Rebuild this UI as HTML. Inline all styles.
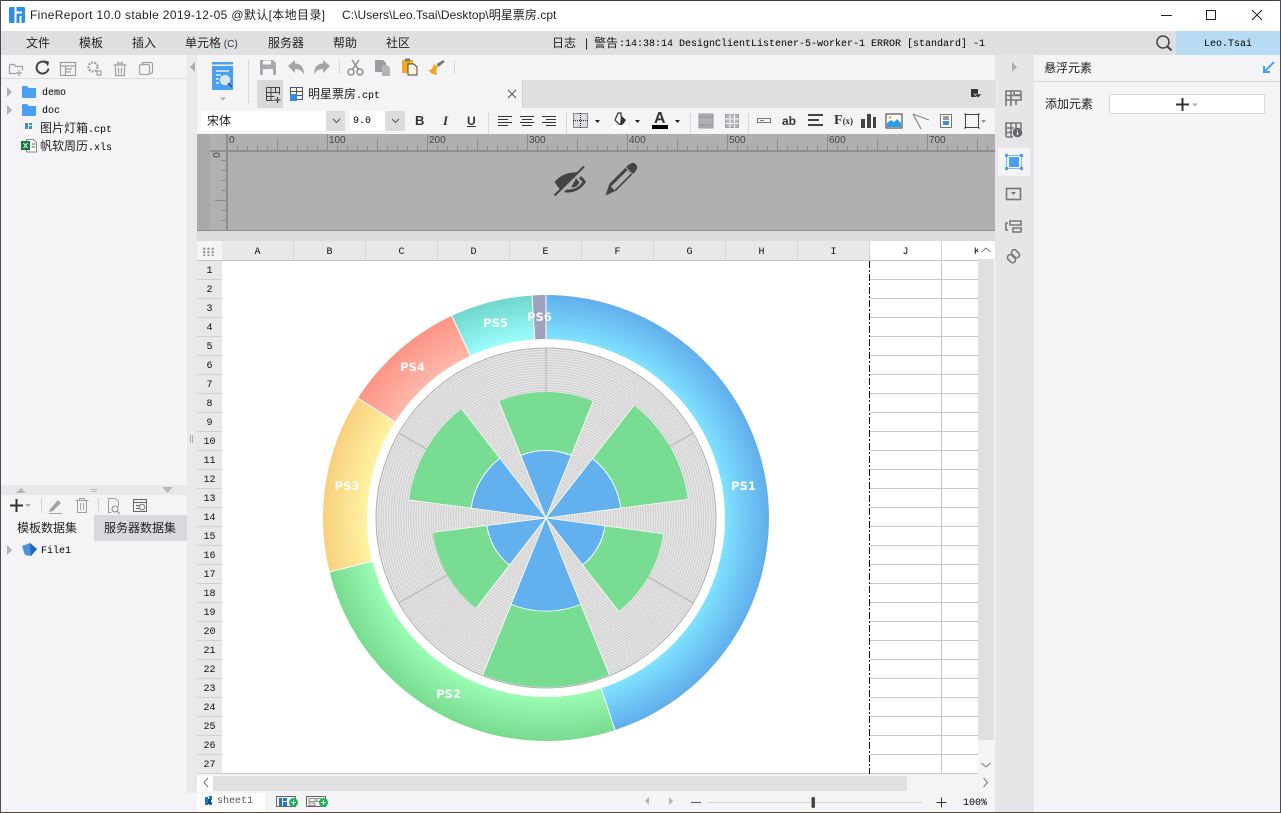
<!DOCTYPE html>
<html><head><meta charset="utf-8"><style>
html,body{margin:0;padding:0;width:1281px;height:813px;overflow:hidden;background:#f4f4f7}
body{position:relative;font-family:"Liberation Sans","Noto Sans CJK SC",sans-serif;font-size:12px;color:#222}
.b{position:absolute}
.t{position:absolute;white-space:nowrap;line-height:16px;font-size:12px;color:#222;font-family:"Liberation Sans","Noto Sans CJK SC",sans-serif}
.m{font-family:"Liberation Mono","Noto Sans CJK SC",monospace;font-size:10px;color:#000}
.r{position:absolute;font-size:10px;color:#444;line-height:10px;font-family:"Liberation Sans",sans-serif}
#cols{position:absolute;left:222px;top:241px;height:20px;display:flex}
#cols div{width:71px;height:19px;border-right:1px solid #d4d4d4;border-bottom:1px solid #c4c4c4;background:#e8e8e8;text-align:center;font:10px/23px "Liberation Mono",monospace;color:#111;overflow:hidden}
#cols div.w{background:#fff}
#rows{position:absolute;left:197px;top:261px;width:25px}
#rows div{height:18px;border-bottom:1px solid #d0d0d0;background:#e8e8e8;text-align:center;font:10px/21px "Liberation Mono",monospace;color:#111;overflow:hidden}
svg{position:absolute;left:0;top:0}
</style></head><body>
<!-- bars -->
<div class="b" style="left:0;top:0;width:1281px;height:31px;background:#fff"></div>
<div class="b" style="left:0;top:31px;width:1281px;height:24px;background:#dfdfe1"></div>
<div class="b" style="left:1176px;top:31px;width:104px;height:24px;background:#b7dbf2"></div>
<!-- left panel -->
<div class="b" style="left:1px;top:78px;width:186px;height:1px;background:#dcdcde"></div>
<div class="b" style="left:187px;top:55px;width:10px;height:738px;background:#e9e9eb"></div>
<div class="b" style="left:1px;top:485px;width:186px;height:10px;background:#e8e8ea"></div>
<div class="b" style="left:94px;top:515px;width:93px;height:26px;background:#d9d9dd"></div>
<!-- center top -->
<div class="b" style="left:257px;top:80px;width:738px;height:28px;background:#dfdfe1"></div>
<div class="b" style="left:257px;top:80px;width:26px;height:28px;background:#d8d8da"></div>
<div class="b" style="left:283px;top:80px;width:240px;height:28px;background:#f4f4f7;border-right:1px solid #cfcfd2;box-sizing:border-box"></div>
<div class="b" style="left:201px;top:111px;width:125px;height:20px;background:#fff"></div>
<div class="b" style="left:326px;top:111px;width:19px;height:20px;background:#dcdcde"></div>
<div class="b" style="left:350px;top:111px;width:35px;height:20px;background:#fff"></div>
<div class="b" style="left:385px;top:111px;width:20px;height:20px;background:#dcdcde"></div>
<div class="b" style="left:197px;top:134px;width:798px;height:96px;background:#b0b0b0"></div>
<div class="b" style="left:197px;top:134px;width:13px;height:96px;background:#a9a9a9"></div>
<div class="b" style="left:197px;top:230px;width:798px;height:1px;background:#8e8e8e"></div>
<div class="b" style="left:197px;top:231px;width:798px;height:10px;background:#dcdcde"></div>
<!-- grid -->
<div class="b" style="left:197px;top:241px;width:25px;height:20px;background:#f4f4f7;border-bottom:1px solid #c4c4c4;box-sizing:border-box"></div>
<div id="cols"><div>A</div><div>B</div><div>C</div><div>D</div><div>E</div><div>F</div><div>G</div><div>H</div><div>I</div><div class="w">J</div><div class="w" style="width:36px;text-align:left;border-right:0"><span style="margin-left:32px">K</span></div></div>
<div id="rows"><div>1</div><div>2</div><div>3</div><div>4</div><div>5</div><div>6</div><div>7</div><div>8</div><div>9</div><div>10</div><div>11</div><div>12</div><div>13</div><div>14</div><div>15</div><div>16</div><div>17</div><div>18</div><div>19</div><div>20</div><div>21</div><div>22</div><div>23</div><div>24</div><div>25</div><div>26</div><div>27</div></div>
<div class="b" style="left:222px;top:261px;width:756px;height:513px;background:#fff"></div>
<div class="b" style="left:870px;top:261px;width:108px;height:513px;background:repeating-linear-gradient(to bottom,#fff 0 18px,#c8c8c8 18px 19px)"></div>
<div class="b" style="left:941px;top:261px;width:1px;height:513px;background:#c8c8c8"></div>
<div class="b" style="left:222px;top:773px;width:756px;height:1px;background:#c8c8c8"></div>
<!-- scrollbars -->
<div class="b" style="left:978px;top:241px;width:17px;height:533px;background:#f4f4f7"></div>
<div class="b" style="left:978px;top:241px;width:17px;height:18px;background:#fff"></div>
<div class="b" style="left:978px;top:259px;width:16px;height:481px;background:#e0e0e0"></div>
<div class="b" style="left:197px;top:774px;width:798px;height:19px;background:#f4f4f7"></div>
<div class="b" style="left:197px;top:776px;width:16px;height:16px;background:#fff"></div>
<div class="b" style="left:213px;top:776px;width:694px;height:15px;background:#e0e0e0"></div>
<div class="b" style="left:197px;top:793px;width:68px;height:20px;background:#fff"></div>
<!-- right -->
<div class="b" style="left:995px;top:55px;width:39px;height:758px;background:#e6e6e8"></div>
<div class="b" style="left:998px;top:148px;width:32px;height:28px;background:#f4f4f7"></div>
<div class="b" style="left:1034px;top:81px;width:246px;height:1px;background:#d8d8da"></div>
<div class="b" style="left:1109px;top:94px;width:156px;height:20px;background:#fff;border:1px solid #d8d8da;box-sizing:border-box"></div>
<!-- disc -->
<div class="b" style="left:376px;top:348px;width:340px;height:340px;border-radius:50%;background:repeating-radial-gradient(circle at center,#cbcbcb 0,#ececec 1.250px,#cbcbcb 2.500px)"></div>

<svg width="1281" height="813" viewBox="0 0 1281 813">
<defs>
<radialGradient id="g1" gradientUnits="userSpaceOnUse" cx="0" cy="0" r="223"><stop offset=".8" stop-color="#80e2ff"/><stop offset="1" stop-color="#60aeec"/></radialGradient>
<radialGradient id="g2" gradientUnits="userSpaceOnUse" cx="0" cy="0" r="223"><stop offset=".8" stop-color="#9bfdb4"/><stop offset="1" stop-color="#78db90"/></radialGradient>
<radialGradient id="g3" gradientUnits="userSpaceOnUse" cx="0" cy="0" r="223"><stop offset=".8" stop-color="#fff3a3"/><stop offset="1" stop-color="#f8d07e"/></radialGradient>
<radialGradient id="g4" gradientUnits="userSpaceOnUse" cx="0" cy="0" r="223"><stop offset=".8" stop-color="#ffb8aa"/><stop offset="1" stop-color="#fb9486"/></radialGradient>
<radialGradient id="g5" gradientUnits="userSpaceOnUse" cx="0" cy="0" r="223"><stop offset=".8" stop-color="#9bfdfd"/><stop offset="1" stop-color="#70d6cc"/></radialGradient>
<pattern id="rt" x="227" y="134" width="100" height="17" patternUnits="userSpaceOnUse">
<path d="M.5 0V17M50.500 5V17M10.500 12V17M20.500 12V17M30.500 12V17M40.500 12V17M60.500 12V17M70.500 12V17M80.500 12V17M90.500 12V17" stroke="#8a8a8a" fill="none"/>
</pattern>
</defs>
<!-- rulers -->
<rect x="227" y="134" width="768" height="17" fill="url(#rt)"/>
<rect x="210" y="150" width="785" height="2" fill="#8e8e8e"/>
<rect x="226" y="134" width="2" height="96" fill="#8e8e8e"/>
<path d="M221 160.500h5M221 170.500h5M221 180.500h5M221 190.500h5M215 200.500h11M221 210.500h5M221 220.500h5" stroke="#8a8a8a" fill="none"/>
<!-- chart -->
<g transform="translate(546 518)">
<g fill="none" stroke-width="44">
<circle r="201" stroke="url(#g1)" pathLength="360" stroke-dasharray="162 360" transform="rotate(-90)"/>
<circle r="201" stroke="url(#g2)" pathLength="360" stroke-dasharray="94 360" transform="rotate(72)"/>
<circle r="201" stroke="url(#g3)" pathLength="360" stroke-dasharray="46.500 360" transform="rotate(166)"/>
<circle r="201" stroke="url(#g4)" pathLength="360" stroke-dasharray="32.500 360" transform="rotate(212.500)"/>
<circle r="201" stroke="url(#g5)" pathLength="360" stroke-dasharray="21.400 360" transform="rotate(245)"/>
<circle r="201" stroke="#a0a0bf" pathLength="360" stroke-dasharray="3.600 360" transform="rotate(266.400)"/>
</g>
<g stroke="#fff" stroke-width="1">
<line y1="-179" y2="-223" transform="rotate(162)"/><line y1="-179" y2="-223" transform="rotate(256)"/><line y1="-179" y2="-223" transform="rotate(302.500)"/><line y1="-179" y2="-223" transform="rotate(335)"/><line y1="-179" y2="-223" transform="rotate(356.400)"/><line y1="-179" y2="-223"/>
</g>
<circle r="170" fill="none" stroke="#b0b0b0" stroke-width="1"/>
<g stroke="#b8b8b8" stroke-width="1.200">
<line y1="0" y2="-170"/><line y1="0" y2="-170" transform="rotate(60)"/><line y1="0" y2="-170" transform="rotate(120)"/><line y1="0" y2="-170" transform="rotate(240)"/><line y1="0" y2="-170" transform="rotate(300)"/>
</g>
<!-- wedges -->
<g fill="none">
<circle r="63" stroke-width="126" stroke="#78dc92" pathLength="360" stroke-dasharray="44 360" transform="rotate(-112)"/>
<circle r="71.500" stroke-width="143" stroke="#78dc92" pathLength="360" stroke-dasharray="44.500 360" transform="rotate(-52)"/>
<circle r="59" stroke-width="118" stroke="#78dc92" pathLength="360" stroke-dasharray="44.500 360" transform="rotate(7.600)"/>
<circle r="84.500" stroke-width="169" stroke="#78dc92" pathLength="360" stroke-dasharray="44 360" transform="rotate(68)"/>
<circle r="57" stroke-width="114" stroke="#78dc92" pathLength="360" stroke-dasharray="45 360" transform="rotate(127.800)"/>
<circle r="69" stroke-width="138" stroke="#78dc92" pathLength="360" stroke-dasharray="44.800 360" transform="rotate(187.500)"/>
<circle r="34" stroke-width="68" stroke="#fff" pathLength="360" stroke-dasharray="44 360" transform="rotate(-112)"/>
<circle r="38" stroke-width="76" stroke="#fff" pathLength="360" stroke-dasharray="44.500 360" transform="rotate(-52)"/>
<circle r="30" stroke-width="60" stroke="#fff" pathLength="360" stroke-dasharray="44.500 360" transform="rotate(7.600)"/>
<circle r="46.800" stroke-width="93.600" stroke="#fff" pathLength="360" stroke-dasharray="44 360" transform="rotate(68)"/>
<circle r="30" stroke-width="60" stroke="#fff" pathLength="360" stroke-dasharray="45 360" transform="rotate(127.800)"/>
<circle r="38" stroke-width="76" stroke="#fff" pathLength="360" stroke-dasharray="44.800 360" transform="rotate(187.500)"/>
<circle r="33.500" stroke-width="67" stroke="#62b0ee" pathLength="360" stroke-dasharray="44 360" transform="rotate(-112)"/>
<circle r="37.500" stroke-width="75" stroke="#62b0ee" pathLength="360" stroke-dasharray="44.500 360" transform="rotate(-52)"/>
<circle r="29.500" stroke-width="59" stroke="#62b0ee" pathLength="360" stroke-dasharray="44.500 360" transform="rotate(7.600)"/>
<circle r="46.350" stroke-width="92.700" stroke="#62b0ee" pathLength="360" stroke-dasharray="44 360" transform="rotate(68)"/>
<circle r="29.500" stroke-width="59" stroke="#62b0ee" pathLength="360" stroke-dasharray="45 360" transform="rotate(127.800)"/>
<circle r="37.500" stroke-width="75" stroke="#62b0ee" pathLength="360" stroke-dasharray="44.800 360" transform="rotate(187.500)"/>
</g>
<g stroke="#fff" stroke-width=".8">
<line y2="-126" transform="rotate(-22)"/><line y2="-126" transform="rotate(22)"/>
<line y2="-143" transform="rotate(38)"/><line y2="-143" transform="rotate(82.500)"/>
<line y2="-118" transform="rotate(97.600)"/><line y2="-118" transform="rotate(142.100)"/>
<line y2="-169" transform="rotate(158)"/><line y2="-169" transform="rotate(202)"/>
<line y2="-114" transform="rotate(217.800)"/><line y2="-114" transform="rotate(262.800)"/>
<line y2="-138" transform="rotate(277.500)"/><line y2="-138" transform="rotate(322.300)"/>
</g>
</g>
<g font-family="DejaVu Sans,Liberation Sans,sans-serif" font-weight="700" font-size="11.500" fill="#fff" text-anchor="middle" opacity=".95">
<text x="743.500" y="490">PS1</text><text x="448.500" y="698">PS2</text><text x="347" y="490">PS3</text><text x="412.500" y="371">PS4</text><text x="495.500" y="327">PS5</text><text x="539.500" y="321">PS6</text>
</g>
<line x1="869.500" y1="261" x2="869.500" y2="774" stroke="#111" stroke-dasharray="7 2 2 2"/>

<!-- window border -->
<rect x="0" y="0" width="1281" height="1" fill="#3f3f50"/><rect x="0" y="0" width="1" height="813" fill="#4a4a58"/><rect x="1280" y="0" width="1" height="813" fill="#4a4a58"/><rect x="0" y="812" width="1281" height="1" fill="#5a4038"/>
<!-- title -->
<rect x="9" y="7" width="16" height="16" rx="1.500" fill="#2f8fe6"/>
<path d="M15.500 7V23M15.500 12.500H22M20.500 16V23" stroke="#fff" stroke-width="2" fill="none"/>
<path d="M1161 15.500h11" stroke="#222"/><rect x="1206.500" y="10.500" width="9" height="9" fill="none" stroke="#222"/><path d="M1252 10l10 10M1262 10l-10 10" stroke="#222"/>
<!-- search -->
<circle cx="1163" cy="42" r="6" fill="none" stroke="#444" stroke-width="1.500"/><path d="M1167.500 46.500l4 4" stroke="#444" stroke-width="2"/>

<!-- left toolbar -->
<g fill="none" stroke="#a0a0a4" stroke-width="1.200">
<path d="M9.500 64.500h5l1 2h7v4M9.500 64.500v9h7"/><path d="M19 70v6M16 73h6"/>
<rect x="60.500" y="62.500" width="15" height="13"/><path d="M60.500 66h15M65.500 66v9.500M66 69h6M66 72h5"/>
<circle cx="93" cy="67" r="4.500" stroke-width="2.200" stroke-dasharray="2 1.200"/><rect x="97" y="71" width="4" height="4"/>
<path d="M113.500 65h13M117.500 65v-2h5v2M115.500 65v10.500h9V65M118.500 67.500v6M121.500 67.500v6"/>
<rect x="139.500" y="64.500" width="10" height="10" rx="2"/><path d="M142.500 64v-1.500h8.500a1.500 1.500 0 0 1 1.500 1.500v8a1.500 1.500 0 0 1-1.500 1.500h-1.500"/>
</g>
<path d="M47 63.500a6 6 0 1 0 1.500 5" fill="none" stroke="#444" stroke-width="2"/><path d="M44 60.500l5 1-1 5z" fill="#444"/>
<!-- tree -->
<path d="M7 87l5 5-5 5zM7 105l5 5-5 5zM7 545l5 5-5 5z" fill="#aeaeb2"/>
<path d="M22 87a1 1 0 0 1 1-1h4l2 2h7v9a1 1 0 0 1-1 1H23a1 1 0 0 1-1-1z" fill="#4a9ff5"/>
<path d="M22 105a1 1 0 0 1 1-1h4l2 2h7v9a1 1 0 0 1-1 1H23a1 1 0 0 1-1-1z" fill="#4a9ff5"/>
<path d="M24 121h9v11l-2 3h-7z" fill="#fff" stroke="#e4e4e6" stroke-width=".5"/><rect x="25" y="123" width="7" height="6" fill="#2f8fe6"/><path d="M28.500 123v6M28.500 125.500h3" stroke="#fff"/>
<path d="M26.500 139.500h7l3 3v9.500h-10z" fill="#fff" stroke="#888"/><rect x="21" y="141" width="9" height="9" fill="#1c7a3e"/><path d="M32 144h3M32 147h3" stroke="#1c7a3e"/><path d="M23.500 143l4 5M27.500 143l-4 5" stroke="#fff"/>
<!-- divider tri -->
<path d="M16 493l5-5 5 5zM162 487h11l-5.500 6z" fill="#b8b8bc"/><path d="M91 489.500h6M91 491.500h6" stroke="#b8b8bc"/>
<path d="M195 62l-5 5 5 5z" fill="#aeaeb2"/><path d="M190.500 435v8M192.500 435v8" stroke="#aeaeb2"/>
<!-- bottom-left toolbar -->
<path d="M10 505.500h13M16.500 499v13" stroke="#333" stroke-width="2"/><path d="M25 504h6l-3 3z" fill="#aaa"/>
<path d="M41.500 498v15M98.500 498v15" stroke="#d4d4d6"/>
<path d="M50 509l8-9 3 3-8 8-4 1z" fill="#a4a4a8"/><path d="M49 513.500h13" stroke="#a4a4a8"/>
<path d="M75.500 500.500h13M79.500 500.500v-2h5v2M77.500 500.500v12h9v-12M80.500 503v7M83.500 503v7" fill="none" stroke="#a0a0a4"/>
<path d="M108.500 498.500h7l3 3v5M108.500 498.500v14h3" fill="none" stroke="#a0a0a4"/><circle cx="115" cy="509" r="3" fill="none" stroke="#888"/><path d="M117 511l3 3" stroke="#888"/>
<rect x="133.500" y="499.500" width="13" height="12" fill="none" stroke="#666"/><path d="M133.500 502.500h13M136 505.500h4M136 508.500h3" stroke="#666"/><circle cx="142" cy="507" r="2.800" fill="none" stroke="#777"/>
<path d="M22 546l8-3 7 6-6 7-6-1z" fill="#4a8fe0"/><path d="M30 543l7 6-6 7z" fill="#2465b8"/>

<!-- center toolbar -->
<rect x="212" y="62" width="21" height="2.500" fill="#4a9ff5"/><path d="M212 66h21v24h-21z" fill="#4a9ff5"/>
<path d="M216 71h13M216 75h5M216 79h3M216 83h3" stroke="#fff" stroke-width="1.200"/><circle cx="225" cy="80" r="4.500" fill="#cfe6fb" stroke="#fff"/><path d="M228 83l4 4" stroke="#445" stroke-width="1.500"/>
<path d="M220 97.500h6l-3 3z" fill="#aaa"/>
<path d="M248.500 60v43M339.500 60v14M454.500 60v14" stroke="#d8d8da"/>
<path d="M260 60h13l3 3v12h-16z" fill="#a9a9ad"/><rect x="263" y="60.500" width="8" height="4" fill="#f4f4f7"/><rect x="263" y="69" width="10" height="6" fill="#f4f4f7"/>
<path d="M288 66l7-6v3.500c6 0 9 4 9 11-2-4-5-5.500-9-5.500V73z" fill="#a4a4a8"/>
<path d="M330 66l-7-6v3.500c-6 0-9 4-9 11 2-4 5-5.500 9-5.500V73z" fill="#a4a4a8"/>
<g fill="none" stroke="#8c8c90" stroke-width="1.500"><circle cx="351" cy="72" r="3"/><circle cx="360" cy="72" r="3"/><path d="M352.500 69.500L359 60M358.500 69.500L352 60"/></g>
<path d="M375 60h8l3 3v3h-3v6h-8z" fill="#9c9ca0"/><path d="M382 65h5l3 3v8h-8z" fill="#b4b4b8"/>
<rect x="402" y="60" width="11" height="13" fill="#f2aa1c"/><rect x="405" y="58.500" width="5" height="3" fill="#777"/><path d="M408 64h6l3 3v8h-9z" fill="#fdf6dc" stroke="#444"/>
<path d="M434 64l4 3-2 3 1 5c-3 0-7-2-8.500-5 2 0 4 0 5.500-6z" fill="#f2a41c"/><path d="M436.500 64l7-4 1 2-6 5z" fill="#777"/>
<!-- tab icons -->
<g fill="none" stroke="#444"><path d="M266.500 87.500h13v7M266.500 87.500v13h7M266.500 92.500h13M266.500 96.500h8M271 87.500v13M275.500 87.500v5"/><path d="M277.500 97v6M274.500 100h6" stroke-width="1.200"/>
<rect x="290.500" y="87.500" width="12" height="12" stroke="#555"/><path d="M290.500 91.500h12M296.500 87.500v12M290.500 95.500h12" stroke="#555"/></g>
<rect x="290" y="94" width="7" height="7" fill="#2f8fe6"/>
<path d="M508 90l8 8M516 90l-8 8" stroke="#555" stroke-width="1.100"/>
<rect x="971" y="89" width="7" height="8" fill="#333"/><path d="M974 94h8l-4 4z" fill="#333" stroke="#dfdfe1" stroke-width=".6"/>
<!-- format bar -->
<path d="M333 119l3.500 3.500L340 119M392 119l3.500 3.500L399 119" fill="none" stroke="#555"/>
<path d="M488.500 113v21M566.500 113v21M690.500 113v21M748.500 113v21" stroke="#d8d8da"/>
<path d="M498 116.500h14M498 119.500h10M498 122.500h14M498 125.500h10M520 116.500h14M522 119.500h10M520 122.500h14M522 125.500h10M542 116.500h14M546 119.500h10M542 122.500h14M546 125.500h10" stroke="#333"/>
<rect x="573.500" y="113.500" width="14" height="14" fill="#dcdce0" stroke="#222" stroke-dasharray="1 1"/><path d="M580.500 113v15M573 120.500h15" stroke="#222" stroke-dasharray="1 1"/>
<path d="M595 120h5l-2.500 3zM635 120h5l-2.500 3zM675 120h5l-2.500 3z" fill="#222"/>
<path d="M618 113h3v3l4 4-5 5-5-5z" fill="none" stroke="#333" stroke-width="1.200"/><path d="M621 116l5 4-2 3-2 2-2 0z" fill="#333"/><rect x="612" y="125" width="16" height="4" fill="#fff"/>
<rect x="652" y="125" width="16" height="4" fill="#000"/>
<rect x="699" y="114" width="14" height="14" fill="#b0b0b4" stroke="#9a9a9e"/><path d="M699 117h14M699 125h14" stroke="#8c8c90"/>
<rect x="725.500" y="114.500" width="13" height="13" fill="#b8b8bc" stroke="#a0a0a4"/><path d="M725 119h14M725 123.500h14M730 114v14M734.500 114v14" stroke="#f4f4f7"/>
<rect x="757.500" y="118.500" width="13" height="4" fill="none" stroke="#777"/><path d="M760 120.500h4" stroke="#777"/>
<path d="M808 115h15M808 120h11M808 125h15" stroke="#444" stroke-width="2"/>
<path d="M861 119h4v9h-4zM867 114h4v14h-4zM873 117h3v11h-3z" fill="#444"/>
<rect x="886" y="114" width="16" height="14" fill="#fff" stroke="#333" stroke-width="1"/><path d="M887 127v-4l4-3 3 2 3-3 4 4v4z" fill="#2f9fe8"/><circle cx="890" cy="117.500" r="1.500" fill="#f5b942"/>
<path d="M913 114l16 6M913 114l8 15" stroke="#888" stroke-width="1.200" fill="none"/>
<rect x="940.500" y="114.500" width="11" height="13" fill="#fff" stroke="#777"/><path d="M943 117h6M943 119h6" stroke="#333"/><rect x="943" y="121" width="6" height="4" fill="#3a8fd8"/>
<rect x="965.500" y="114.500" width="13" height="13" fill="none" stroke="#444"/><path d="M964 114h2M978 114h2M964 128h2M978 128h2" stroke="#444"/><path d="M981 120h5l-2.500 3z" fill="#999"/>
<!-- eye-off -->
<path d="M554.500 182c6-7 14-10.500 24-9.500l-3.500 3.500c-6 0-12 2-16 6 1.500 2 3 3.300 5 4.500l-2.500 2.500c-3-1.800-5-4-7-7z" fill="#444"/>
<path d="M573 176l-13 13-3-3c1-5 6-10 16-10z" fill="#444"/>
<path d="M581 176c2 1.800 3.800 3.800 5 6-4.500 7-11 10.500-18.500 10.500-1.500 0-2.500-.2-3.500-.5l2.500-2.500c7.500.5 12.500-2.500 16-7.500-1-1.200-2-2.300-3.500-3.500z" fill="#444"/>
<path d="M571 187.500c4 0 7-1.500 8.500-5.500l-3.500-3.500z" fill="#444"/>
<path d="M554.500 195.500l29.500-29" stroke="#444" stroke-width="2.200" fill="none"/>
<!-- pencil -->
<path d="M605.500 195.500l3.900-11.700 19.100-19.100 2.500-1.500c2-.8 3.600-.2 4.800 1 1.300 1.300 1.800 3 1 4.900l-1.500 2.500-19 19zM610.900 186.600l3.500 3.500 16.400-16.400-3.500-3.500z" fill="#444" fill-rule="evenodd"/>
<path d="M625.700 167.500l7.800 7.800" stroke="#b0b0b0" stroke-width="1"/>
<!-- side icons -->
<path d="M1012 62v10l5-5z" fill="#aeaeb2"/>
<g fill="none" stroke="#77777c" stroke-width="1.600">
<path d="M1006 106V91h15M1021 91v4h-7v-4M1006 95.500h15M1006 100h15v-4M1011 91v15M1016 100v5"/>
<path d="M1006 137v-14h15v6M1006 128h8M1006 132.500h6M1011 123v14M1016 123v5M1006 137h7"/>
<rect x="1006.500" y="188.500" width="14" height="11"/>
<path d="M1010 221h11v4h-11zM1013 228h8v4h-8zM1008 223h-2v7h2"/>
<rect x="1011" y="251" width="9" height="5.500" rx="2.700" transform="rotate(45 1015.500 253.700)"/>
<rect x="1007" y="256" width="9" height="5.500" rx="2.700" transform="rotate(45 1011.500 258.700)"/>
</g>
<circle cx="1017.500" cy="132.500" r="4.800" fill="#66666b"/><path d="M1017.500 130v.800M1017.500 132v3" stroke="#fff" stroke-width="1.200"/>
<path d="M1011 192h5l-2.500 3z" fill="#77777c"/>
<rect x="1009" y="157" width="10" height="10" fill="#4a9ff5"/>
<rect x="1006.500" y="155.500" width="15" height="13" fill="none" stroke="#7cbaf7"/>
<path d="M1005 154h3v3h-3zM1020 154h3v3h-3zM1005 167h3v3h-3zM1020 167h3v3h-3z" fill="#4a9ff5"/>
<!-- right panel -->
<path d="M1274 62l-9 9M1264 66v6h6" stroke="#4a9ff5" stroke-width="2" fill="none"/>
<path d="M1176 104.500h13M1182.500 98v13" stroke="#333" stroke-width="2"/><path d="M1192 103.500h6l-3 3z" fill="#aaa"/>
<!-- scroll arrows -->
<path d="M981.500 252l4.500-4 4.500 4M981.500 763l4.500 4 4.500-4M208 778l-4 4.500 4 4.500M983.500 778l4 4.500-4 4.500" fill="none" stroke="#777"/>
<!-- bottom -->
<path d="M205 797h3v8h-3zM209 796h3v4h-3zM209 802h3v3h-3z" fill="#2073c8"/><rect x="208" y="799" width="3" height="5" fill="#0f4f90"/>
<rect x="276.500" y="796.500" width="19" height="10" fill="none" stroke="#666"/><path d="M279 798h3v8h-3zM283 798h4v3h-4zM283 802h4v4h-4z" fill="#2073c8"/>
<circle cx="293.500" cy="802.500" r="4.500" fill="#19b552"/><path d="M291 802.500h5M293.500 800v5" stroke="#fff"/>
<rect x="306.500" y="796.500" width="19" height="10" fill="none" stroke="#666"/><path d="M309 798.500h6v3h-6zM309 803h6v2.500h-6zM316.500 798.500h5v3h-5z" fill="none" stroke="#777" stroke-width=".8"/>
<circle cx="323.500" cy="802.500" r="4.500" fill="#19b552"/><path d="M321 802.500h5M323.500 800v5" stroke="#fff"/>
<path d="M649 797v8l-4-4zM669 797v8l4-4z" fill="#b4b4b8"/>
<path d="M691 802.500h10" stroke="#555"/><path d="M708 802.500h214" stroke="#d4d4d6"/>
<rect x="811.500" y="797" width="3.500" height="11" rx="1.500" fill="#444"/>
<path d="M936.500 802.500h10M941.500 797.500v10" stroke="#333"/>
</svg>

<!-- text -->
<span class="t" style="left:30px;top:7px;letter-spacing:.35px">FineReport 10.0 stable 2019-12-05 @默认[本地目录]</span>
<span class="t" style="left:342px;top:7px;letter-spacing:.05px">C:\Users\Leo.Tsai\Desktop\明星票房.cpt</span>
<span class="t" style="left:26px;top:35px">文件</span><span class="t" style="left:79px;top:35px">模板</span><span class="t" style="left:132px;top:35px">插入</span><span class="t" style="left:185px;top:35px">单元格<span style="font-size:10px;color:#335"> (C)</span></span><span class="t" style="left:268px;top:35px">服务器</span><span class="t" style="left:333px;top:35px">帮助</span><span class="t" style="left:386px;top:35px">社区</span>
<span class="t" style="left:552px;top:35px">日志</span><span class="t" style="left:585px;top:35px">|</span><span class="t" style="left:594px;top:35px">警告</span>
<span class="t m" style="left:619px;top:37px">:14:38:14 DesignClientListener-5-worker-1 ERROR [standard] -1</span>
<span class="t m" style="left:1204px;top:37px">Leo.Tsai</span>
<span class="t m" style="left:42px;top:86px">demo</span><span class="t m" style="left:42px;top:104px">doc</span>
<span class="t" style="left:40px;top:120px">图片灯箱<span class="m">.cpt</span></span><span class="t" style="left:40px;top:138px">帆软周历<span class="m">.xls</span></span>
<span class="t m" style="left:41px;top:544px">File1</span>
<span class="t" style="left:17px;top:520px">模板数据集</span><span class="t" style="left:104px;top:520px">服务器数据集</span>
<span class="t" style="left:308px;top:86px">明星票房<span class="m">.cpt</span></span>
<span class="t" style="left:207px;top:113px">宋体</span><span class="t m" style="left:353px;top:114px">9.0</span>
<span class="t" style="left:415px;top:113px;font-weight:700;font-size:13px;color:#333">B</span><span class="t" style="left:443px;top:113px;font-style:italic;font-weight:700;font-size:13px;font-family:'Liberation Serif',serif;color:#333">I</span><span class="t" style="left:467px;top:113px;font-weight:700;font-size:12px;color:#333;text-decoration:underline">U</span>
<span class="t" style="left:654px;top:111px;font-weight:700;font-size:16px;color:#333">A</span>
<span class="t" style="left:782px;top:113px;font-weight:700;font-size:12px;color:#333">ab</span>
<span class="t" style="left:834px;top:113px;font-family:'Liberation Serif',serif;font-weight:700;font-size:14px;color:#333">F<span style="font-size:9px">(x)</span></span>
<span class="r" style="left:229px;top:136px">0</span><span class="r" style="left:329px;top:136px">100</span><span class="r" style="left:429px;top:136px">200</span><span class="r" style="left:529px;top:136px">300</span><span class="r" style="left:629px;top:136px">400</span><span class="r" style="left:729px;top:136px">500</span><span class="r" style="left:829px;top:136px">600</span><span class="r" style="left:929px;top:136px">700</span>
<span class="r" style="left:212px;top:150px;transform:rotate(90deg)">0</span>
<span class="t" style="left:1044px;top:60px">悬浮元素</span><span class="t" style="left:1045px;top:96px">添加元素</span>
<span class="t m" style="left:217px;top:794px;color:#555">sheet1</span><span class="t m" style="left:963px;top:796px">100%</span>
<!-- corner dots -->
<div class="b" style="left:202px;top:247px;width:13px;height:9px;background:radial-gradient(circle,#99999c 1.300px,transparent 1.400px) 0 0/4.300px 3.500px"></div>
</body></html>
